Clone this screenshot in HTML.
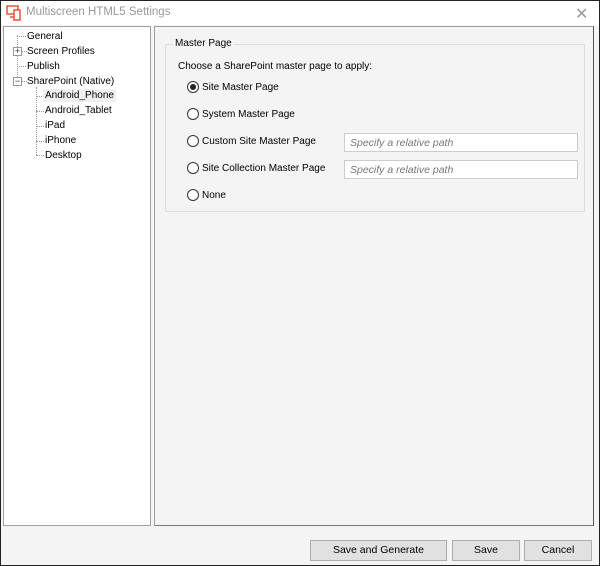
<!DOCTYPE html>
<html><head><style>
*{margin:0;padding:0;box-sizing:border-box}
body{width:600px;height:566px;overflow:hidden;font-family:"Liberation Sans",Arial,sans-serif;font-size:10px;color:#000}
.win{position:absolute;left:0;top:0;width:600px;height:566px;border:1px solid #222;background:#f4f4f4}
.title{position:absolute;left:0;top:0;width:598px;height:24px;background:#fff}
.title span{position:absolute;left:25px;top:5px;font-size:11.5px;color:#999}
.close{position:absolute;left:574px;top:3px;font-size:16px;color:#999}
.left{position:absolute;left:2px;top:25px;width:148px;height:500px;background:#fff;border:1px solid #a0a0a0}
.right{position:absolute;left:153px;top:25px;width:440px;height:500px;background:#f4f4f4;border:1px solid #a0a0a0;border-right-color:#555;border-bottom-color:#777}
.t{position:absolute;white-space:nowrap}
.grp{position:absolute;left:10px;top:17px;width:420px;height:168px;border:1px solid #dcdcdc}
.radio{position:absolute;width:12px;height:12px;border:1px solid #333;border-radius:50%;background:#fff}
.radio.on::after{content:"";position:absolute;left:2px;top:2px;width:6px;height:6px;border-radius:50%;background:#222}
.inp{position:absolute;width:234px;height:19px;border:1px solid #ccc;background:#fff;font-style:italic;color:#777;padding:3px 5px;font-size:10.5px}
.btn{position:absolute;top:539px;height:21px;border:1px solid #adadad;background:#e1e1e1;text-align:center;line-height:19px;font-size:10.5px}
.dl{position:absolute;border-left:1px dotted #999}
.dh{position:absolute;border-top:1px dotted #999}
.pm{position:absolute;width:9px;height:9px;border:1px solid #999;background:#fff;font-size:9px;line-height:7px;text-align:center;color:#333}
</style></head><body>
<div class="win">
<div class="title">
<svg style="position:absolute;left:5px;top:4px" width="16" height="16" viewBox="0 0 16 16"><rect x="1" y="1" width="11" height="8" fill="none" stroke="#e5533c" stroke-width="1.5"/><rect x="8" y="5" width="6" height="10" fill="#fff" stroke="#e5533c" stroke-width="1.5"/><line x1="4" y1="12" x2="8" y2="12" stroke="#e5533c" stroke-width="1.5"/></svg>
<span>Multiscreen HTML5 Settings</span>
<div class="close">✕</div>
</div>
<div class="left">
<div class="dl" style="left:13px;top:8px;height:50px"></div>
<div class="dh" style="left:13px;top:9px;width:9px"></div>
<div class="dh" style="left:18px;top:24px;width:5px"></div>
<div class="dh" style="left:13px;top:39px;width:9px"></div>
<div class="dh" style="left:18px;top:54px;width:5px"></div>
<div class="pm" style="left:9px;top:20px">+</div>
<div class="pm" style="left:9px;top:50px">−</div>
<div class="dl" style="left:32px;top:60px;height:68px"></div>
<div class="dh" style="left:32px;top:69px;width:8px"></div>
<div class="dh" style="left:32px;top:84px;width:8px"></div>
<div class="dh" style="left:32px;top:99px;width:8px"></div>
<div class="dh" style="left:32px;top:114px;width:8px"></div>
<div class="dh" style="left:32px;top:128px;width:8px"></div>
<div class="t" style="left:23px;top:4px">General</div>
<div class="t" style="left:23px;top:19px">Screen Profiles</div>
<div class="t" style="left:23px;top:34px">Publish</div>
<div class="t" style="left:23px;top:49px">SharePoint (Native)</div>
<div class="t" style="left:39px;top:62px;background:#f0f0f0;padding:1px 2px">Android_Phone</div>
<div class="t" style="left:41px;top:78px">Android_Tablet</div>
<div class="t" style="left:41px;top:93px">iPad</div>
<div class="t" style="left:41px;top:108px">iPhone</div>
<div class="t" style="left:41px;top:123px">Desktop</div>
</div>
<div class="right">
<div class="grp"></div>
<div class="t" style="left:18px;top:11px;background:#f4f4f4;padding:0 2px">Master Page</div>
<div class="t" style="left:23px;top:34px">Choose a SharePoint master page to apply:</div>
<div class="radio on" style="left:32px;top:54px"></div><div class="t" style="left:47px;top:55px">Site Master Page</div>
<div class="radio" style="left:32px;top:81px"></div><div class="t" style="left:47px;top:82px">System Master Page</div>
<div class="radio" style="left:32px;top:108px"></div><div class="t" style="left:47px;top:109px">Custom Site Master Page</div>
<div class="inp" style="left:189px;top:106px">Specify a relative path</div>
<div class="radio" style="left:32px;top:135px"></div><div class="t" style="left:47px;top:136px">Site Collection Master Page</div>
<div class="inp" style="left:189px;top:133px">Specify a relative path</div>
<div class="radio" style="left:32px;top:162px"></div><div class="t" style="left:47px;top:163px">None</div>
</div>
<div class="btn" style="left:309px;width:137px">Save and Generate</div>
<div class="btn" style="left:451px;width:68px">Save</div>
<div class="btn" style="left:523px;width:68px">Cancel</div>
</div>
</body></html>
